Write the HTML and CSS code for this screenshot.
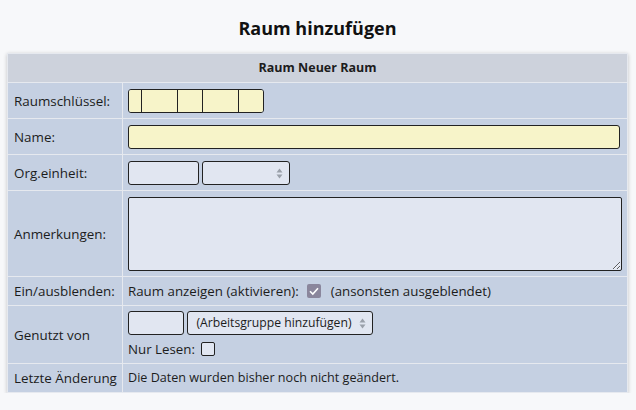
FILE: index.html
```html
<!DOCTYPE html>
<html lang="de">
<head>
<meta charset="utf-8">
<title>Raum hinzufügen</title>
<link rel="stylesheet" href="styles.css">
</head>
<body>
<div class="page">
  <h1 class="title">Raum hinzufügen</h1>
  <table class="form">
    <colgroup><col class="c1"><col class="c2"></colgroup>
    <tr class="head"><th colspan="2">Raum Neuer Raum</th></tr>
    <tr class="r35">
      <td class="lbl">Raumschlüssel:</td>
      <td class="val">
        <span class="keys">
          <input class="k k1" type="text"><input class="k k2" type="text"><input class="k k3" type="text"><input class="k k2" type="text"><input class="k k3" type="text">
        </span>
      </td>
    </tr>
    <tr class="r35">
      <td class="lbl">Name:</td>
      <td class="val"><input class="inp yellow name" type="text"></td>
    </tr>
    <tr class="r35">
      <td class="lbl">Org.einheit:</td>
      <td class="val"><input class="inp grey org" type="text"> <span class="sel org-sel"><span class="sel-text"></span><svg class="arrows" width="7" height="11" viewBox="0 0 7 11"><path d="M0.5 4.5 L3.5 0.5 L6.5 4.5 Z M0.5 6.5 L3.5 10.5 L6.5 6.5 Z" fill="#9aa0aa"/></svg></span></td>
    </tr>
    <tr class="r85">
      <td class="lbl">Anmerkungen:</td>
      <td class="val"><textarea class="notes"></textarea></td>
    </tr>
    <tr class="r28">
      <td class="lbl">Ein/ausblenden:</td>
      <td class="val"><span class="line">Raum anzeigen (aktivieren):<span class="cb checked"><svg width="14" height="14" viewBox="0 0 14 14"><path d="M3 7.2 L5.8 10 L11 4.2" fill="none" stroke="#fff" stroke-width="1.6"/></svg></span>(ansonsten ausgeblendet)</span></td>
    </tr>
    <tr class="r57">
      <td class="lbl">Genutzt von</td>
      <td class="val">
        <div class="stack">
          <div><input class="inp grey group" type="text"> <span class="sel group-sel"><span class="sel-text">(Arbeitsgruppe hinzufügen)</span><svg class="arrows" width="7" height="11" viewBox="0 0 7 11"><path d="M0.5 4.5 L3.5 0.5 L6.5 4.5 Z M0.5 6.5 L3.5 10.5 L6.5 6.5 Z" fill="#9aa0aa"/></svg></span></div>
          <div class="ro">Nur Lesen:<span class="cb cb-ro"></span></div>
        </div>
      </td>
    </tr>
    <tr class="r28">
      <td class="lbl">Letzte Änderung</td>
      <td class="val last">Die Daten wurden bisher noch nicht geändert.</td>
    </tr>
  </table>
</div>
</body>
</html>
```
FILE: styles.css
```css
html, body {
  margin: 0;
  padding: 0;
  background: #f7f8fa;
  font-family: "Open Sans", "Noto Sans", sans-serif;
  color: #1c1c1c;
  font-size: 13px;
}
.page {
  padding: 16px 8px 0 7px;
}
.title {
  margin: 0 0 13px 0;
  font-size: 18px;
  line-height: 24px;
  font-weight: 700;
  text-align: center;
  color: #111;
}
.form {
  width: 100%;
  table-layout: fixed;
  border-collapse: separate;
  border-spacing: 1px;
  background: #e6e9ef;
  box-shadow: 0 1px 4px rgba(0,0,0,0.22);
}
.c1 { width: 114px; }
.c2 { width: auto; }
.form th, .form td {
  padding: 0 5px;
  vertical-align: middle;
  line-height: 18px;
}
.head th {
  height: 28px;
  background: #cdd2dc;
  font-weight: 700;
  font-size: 12.5px;
  text-align: center;
  padding: 0;
}
.form td.lbl {
  background: #c5d0e2;
  white-space: nowrap;
  padding: 0 0 0 6px;
  font-size: 13.4px;
}
.val {
  background: #c5d0e2;
}
.last { font-size: 12.6px; }
.r35 td { height: 35px; }
.r85 td { height: 85px; }
.r28 td { height: 28px; }
.r57 td { height: 57px; }

.keys {
  display: inline-flex;
  border: 1px solid #222;
  border-radius: 3px;
  overflow: hidden;
  vertical-align: middle;
}
.k {
  margin: 0;
  padding: 0;
  height: 22px;
  border: 0;
  border-left: 1px solid #222;
  background: #f7f4c9;
  outline: none;
}
.k1 { width: 12px; border-left: 0; }
.k2 { width: 35px; }
.k3 { width: 24px; }

.inp {
  box-sizing: border-box;
  height: 24px;
  margin: 0;
  padding: 0 4px;
  border: 1px solid #222;
  border-radius: 3px;
  vertical-align: middle;
  font: inherit;
}
.yellow { background: #f7f4c9; }
.grey { background: #e1e6f1; }
.name { width: calc(100% - 2px); display: block; }
.org { width: 71px; }
.group { width: 56px; }

.sel {
  box-sizing: border-box;
  display: inline-flex;
  align-items: center;
  position: relative;
  height: 24px;
  border: 1px solid #222;
  border-radius: 3px;
  background: #e1e6f1;
  vertical-align: middle;
  padding: 0 14px 0 8px;
  white-space: nowrap;
  overflow: hidden;
}
.sel-text { font-size: 12.2px; }
.sel .arrows {
  position: absolute;
  right: 6px;
  top: 6px;
}
.org-sel { width: 88px; }
.group-sel { width: 186px; }

.notes {
  box-sizing: border-box;
  display: block;
  width: 100%;
  height: 74px;
  margin: 0;
  border: 1px solid #222;
  border-radius: 2px;
  background: #e1e6f1;
  font: inherit;
}

.line { white-space: nowrap; font-size: 13.3px; }
.cb {
  display: inline-block;
  box-sizing: border-box;
  width: 14px;
  height: 14px;
  border: 1px solid #222;
  border-radius: 2px;
  background: #e1e6f1;
  vertical-align: -2px;
  margin: 0 10px 0 8px;
}
.cb svg { display: block; margin: -1px; }
.cb.checked {
  border: 0;
  background: #8a869c;
}
.cb.checked svg { margin: 0; }
.cb-ro { margin-left: 6px; }

.stack {
  display: flex;
  flex-direction: column;
  gap: 5px;
}
.ro { line-height: 18px; font-size: 13.3px; }
```
